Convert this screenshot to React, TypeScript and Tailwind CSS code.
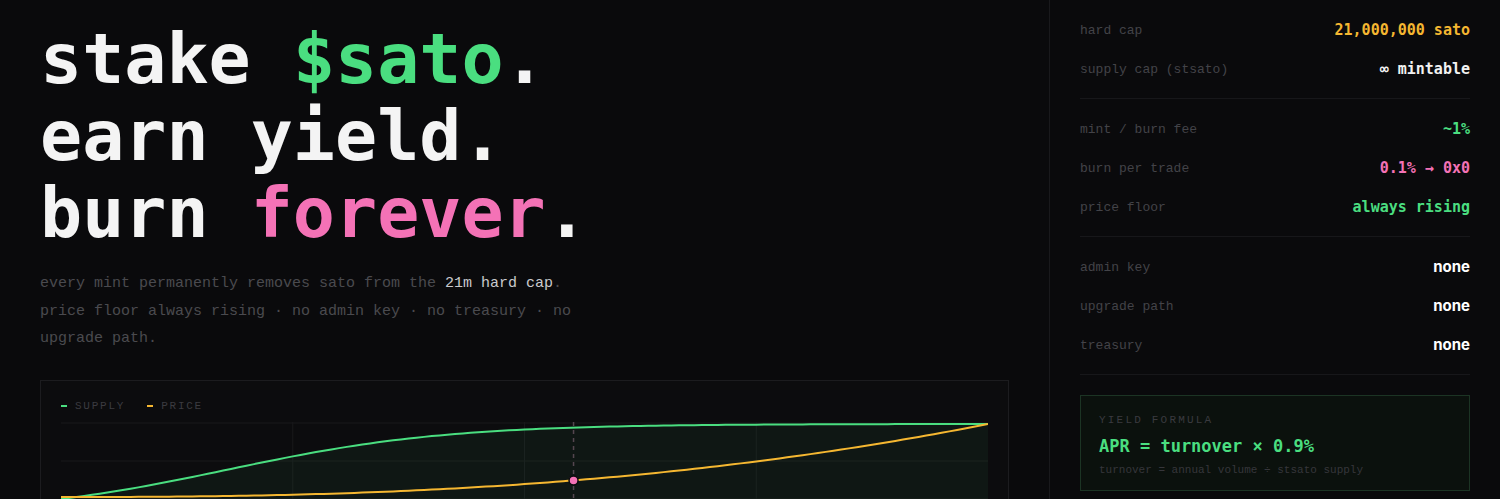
import React from 'react';

const mono = "font-['DejaVu_Sans_Mono',monospace]";
const light = "font-['Liberation_Mono',monospace]";

interface Row {
  label: string;
  value: string;
  color: string;
  sans?: boolean;
}

const groups: Row[][] = [
  [
    { label: 'hard cap', value: '21,000,000 sato', color: 'text-[#f5b731]' },
    { label: 'supply cap (stsato)', value: '∞ mintable', color: 'text-[#f2f2f2]' },
  ],
  [
    { label: 'mint / burn fee', value: '~1%', color: 'text-[#4ade80]' },
    { label: 'burn per trade', value: '0.1% → 0x0', color: 'text-[#f472b6]' },
    { label: 'price floor', value: 'always rising', color: 'text-[#4ade80]' },
  ],
  [
    { label: 'admin key', value: 'none', color: 'text-white', sans: true },
    { label: 'upgrade path', value: 'none', color: 'text-white', sans: true },
    { label: 'treasury', value: 'none', color: 'text-white', sans: true },
  ],
];

// chart geometry
const W = 926;
const H = 180;
const N = 120;

const logistic = (x: number) => 1 / (1 + Math.exp(-8.5 * (x - 0.18)));
const supply = (t: number) => (logistic(t) - logistic(0)) / (logistic(1) - logistic(0));
const ySupply = (t: number) => 77 - 75 * supply(t);
const yPrice = (t: number) => 75 - 73 * Math.pow(t, 2.5);

const line = (fn: (t: number) => number) => {
  const pts: string[] = [];
  for (let i = 0; i <= N; i++) {
    const t = i / N;
    pts.push(`${(t * W).toFixed(1)},${fn(t).toFixed(2)}`);
  }
  return 'M' + pts.join(' L');
};

const supplyPath = line(ySupply);
const pricePath = line(yPrice);
const fillPath = `${supplyPath} L${W},${H} L0,${H} Z`;
const markerT = 512 / W;

const Chart = () => (
  <div className="mt-[27px] border border-[#1c1c1f] bg-[#0c0c0e] px-5 pt-5">
    <div className={`flex items-center gap-[22px] text-[11px] leading-[11px] tracking-[0.16em] text-[#3b3b40] ${light}`}>
      <div className="flex items-center gap-[8px]">
        <span className="h-[1.5px] w-[6px] bg-[#4ade80]" />
        SUPPLY
      </div>
      <div className="flex items-center gap-[8px]">
        <span className="h-[1.5px] w-[6px] bg-[#f5b731]" />
        PRICE
      </div>
    </div>
    <svg className="mt-[10px] block" width="100%" height={H} viewBox={`0 0 ${W} ${H}`} preserveAspectRatio="none">
      {[1, 39, 77, 115, 153].map((y) => (
        <line key={y} x1={0} x2={W} y1={y} y2={y} stroke="#18181b" strokeWidth={1} />
      ))}
      {[231.5, 463, 694.5].map((x) => (
        <line key={x} x1={x} x2={x} y1={0} y2={H} stroke="#18181b" strokeWidth={1} />
      ))}
      <path d={fillPath} fill="rgba(74,222,128,0.055)" />
      <line x1={512} x2={512} y1={0} y2={H} stroke="#54464f" strokeWidth={1.5} strokeDasharray="4 4" />
      <path d={supplyPath} fill="none" stroke="#4ade80" strokeWidth={2} />
      <path d={pricePath} fill="none" stroke="#f5b731" strokeWidth={2} />
      <circle cx={512} cy={yPrice(markerT)} r={4.5} fill="#f472b6" stroke="#0c0c0e" strokeWidth={1.5} />
    </svg>
  </div>
);

export default function App() {
  return (
    <div className="flex h-[499px] w-full overflow-hidden bg-[#0a0a0c]">
      <div className="flex-1 px-10 pt-[21px]">
        <h1 className={`text-[70px] font-bold leading-[77px] text-[#f4f4f4] ${mono}`}>
          stake <span className="text-[#4ade80]">$sato</span>.
          <br />
          earn yield.
          <br />
          burn <span className="text-[#f472b6]">forever</span>.
        </h1>
        <p className={`mt-[18px] max-w-[550px] text-[15px] leading-[27.5px] text-[#4a4a4f] ${light}`}>
          every mint permanently removes sato from the <span className="text-[#c9c9cc]">21m hard cap</span>.
          price floor always rising · no admin key · no treasury · no upgrade path.
        </p>
        <Chart />
      </div>

      <aside className="w-[451px] shrink-0 border-l border-[#19191c] px-[30px] pt-[10px]">
        {groups.map((group, gi) => (
          <div key={gi}>
            {gi > 0 && <div className="my-[10px] h-px bg-[#17171a]" />}
            {group.map((row) => (
              <div key={row.label} className="flex h-[39px] items-center justify-between pt-[2px]">
                <span className={`text-[13px] text-[#434348] ${light}`}>{row.label}</span>
                <span
                  className={`text-[15px] font-bold ${row.color} ${
                    row.sans ? "font-['Inter',sans-serif]" : mono
                  }`}
                >
                  {row.value}
                </span>
              </div>
            ))}
          </div>
        ))}
        <div className="my-[10px] h-px bg-[#17171a]" />
        <div className="mt-[20px] border border-[#1c3424] bg-[#0b110d] px-[18px] pt-[17px] pb-[12px]">
          <div className={`text-[11px] leading-[14px] tracking-[0.2em] text-[#3a3a3f] ${light}`}>YIELD FORMULA</div>
          <div className={`mt-[7px] text-[17px] font-bold leading-[24px] text-[#4ade80] ${mono}`}>
            APR = turnover × 0.9%
          </div>
          <div className={`mt-[4px] text-[11px] leading-[16px] text-[#36363b] ${light}`}>
            turnover = annual volume ÷ stsato supply
          </div>
        </div>
      </aside>
    </div>
  );
}
